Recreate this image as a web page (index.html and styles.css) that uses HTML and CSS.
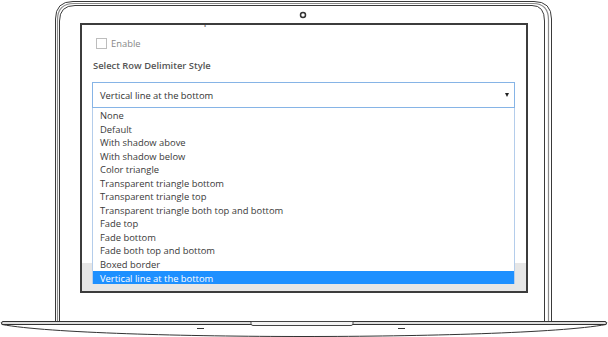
FILE: index.html
```html
<!DOCTYPE html>
<html lang="en">
<head>
  <meta charset="UTF-8">
  <title>Row Delimiter Settings</title>
  <link rel="stylesheet" href="styles.css">
</head>
<body>

  <div class="laptop">
    <svg class="laptop-frame" width="608" height="337" viewBox="0 0 608 337">
      <!-- lid, three outlines -->
      <path d="M55.5 322 V19 Q55.5 1.5 73 1.5 H534 Q551.5 1.5 551.5 19 V322" fill="none" stroke="#3a3a3a" stroke-width="1"/>
      <path d="M57.5 322 V20 Q57.5 3.5 74 3.5 H533 Q548.5 3.5 548.5 20 V322" fill="none" stroke="#8a8a8a" stroke-width="1.2"/>
      <path d="M59.5 322 V21 Q59.5 5.5 75 5.5 H532 Q544.5 5.5 544.5 21 V322" fill="none" stroke="#3a3a3a" stroke-width="1"/>
      <!-- camera -->
      <circle cx="303" cy="15" r="2.5" fill="#fff" stroke="#333" stroke-width="1.5"/>
      <!-- base -->
      <path d="M3 321.5 H605 Q608 322 606 324.5 C560 333 420 336.5 304 336.5 C188 336.5 48 333 2 324.5 Q0 322 3 321.5 Z" fill="#fff" stroke="#333" stroke-width="1"/>
      <path d="M3 321.5 H605 Q607.5 322.5 606 324.5 H2 Q0.5 322.5 3 321.5 Z" fill="#dedede" stroke="#333" stroke-width="1"/>
      <!-- opening notch -->
      <path d="M251 321.5 H353 V323.5 Q353 325.5 351 325.5 H253 Q251 325.5 251 323.5 Z" fill="#f4f4f4" stroke="#444" stroke-width="1"/>
      <!-- feet marks -->
      <line x1="197" y1="328.5" x2="204" y2="328.5" stroke="#333" stroke-width="1"/>
      <line x1="398" y1="328.5" x2="405" y2="328.5" stroke="#333" stroke-width="1"/>
    </svg>

    <div class="screen">
      <div class="clip-line"><span>Enable Row Delimiter Options</span></div>

      <div class="check-row">
        <span class="checkbox"></span>
        <span class="check-label">Enable</span>
      </div>

      <div class="field-label">Select Row Delimiter Style</div>

      <div class="select-wrap">
        <div class="select">
          <span class="select-value">Vertical line at the bottom</span>
          <span class="arrow"></span>
        </div>
        <ul class="options">
          <li>None</li>
          <li>Default</li>
          <li>With shadow above</li>
          <li>With shadow below</li>
          <li>Color triangle</li>
          <li>Transparent triangle bottom</li>
          <li>Transparent triangle top</li>
          <li>Transparent triangle both top and bottom</li>
          <li>Fade top</li>
          <li>Fade bottom</li>
          <li>Fade both top and bottom</li>
          <li>Boxed border</li>
          <li class="selected">Vertical line at the bottom</li>
        </ul>
      </div>

      <div class="screen-footer"></div>
    </div>
  </div>

</body>
</html>
```

FILE: styles.css
```css
* {
  box-sizing: border-box;
}

body {
  margin: 0;
  background: #fff;
  font-family: 'Open Sans', 'Noto Sans', sans-serif;
}

.laptop {
  position: relative;
  width: 608px;
  height: 337px;
  padding: 23px 0 0 80px;
  overflow: hidden;
}

.laptop-frame {
  position: absolute;
  left: 0;
  top: 0;
}

.screen {
  position: relative;
  width: 448px;
  height: 270px;
  border: 2px solid #3c3c3c;
  background: #fff;
  display: flex;
  flex-direction: column;
  padding: 0 11px 0 10px;
  overflow: hidden;
  font-size: 9.4px;
  color: #333;
}

.clip-line {
  height: 3px;
  overflow: hidden;
  padding-left: 5px;
}

.clip-line span {
  display: block;
  margin-top: -9px;
  line-height: 12px;
  font-weight: 600;
  color: #777;
}

.check-row {
  display: flex;
  align-items: center;
  gap: 4px;
  margin-top: 10px;
  padding-left: 4px;
  height: 11px;
}

.checkbox {
  width: 11px;
  height: 11px;
  border: 1px solid #bdbdbd;
  background: #fff;
}

.check-label {
  color: #888;
  line-height: 11px;
}

.field-label {
  margin-top: 10px;
  line-height: 14px;
  font-weight: 600;
  color: #555;
  padding-left: 1px;
}

.select-wrap {
  position: relative;
  margin-top: 9px;
  width: 423px;
}

.select {
  height: 26px;
  border: 1px solid #86b4e6;
  display: flex;
  align-items: center;
  justify-content: space-between;
  padding: 0 5px 0 7px;
  color: #333;
}

.select-value {
  margin-top: 1px;
}

.arrow {
  width: 0;
  height: 0;
  border-left: 2.5px solid transparent;
  border-right: 2.5px solid transparent;
  border-top: 4px solid #222;
  margin-top: -1px;
}

.options {
  position: absolute;
  top: 100%;
  left: 0;
  width: 423px;
  margin: 0;
  padding: 0;
  list-style: none;
  background: #fff;
  border-left: 1px solid #b4cdeb;
  border-right: 1px solid #b4cdeb;
  z-index: 2;
}

.options li {
  height: 13.55px;
  line-height: 13.55px;
  padding: 1px 0 0 7px;
  color: #3a3a3a;
  white-space: nowrap;
}

.options li.selected {
  background: #1e90ff;
  color: #fff;
}

.screen-footer {
  margin-top: auto;
  margin-left: -10px;
  margin-right: -11px;
  height: 28px;
  background: #e6e6e6;
}
```
